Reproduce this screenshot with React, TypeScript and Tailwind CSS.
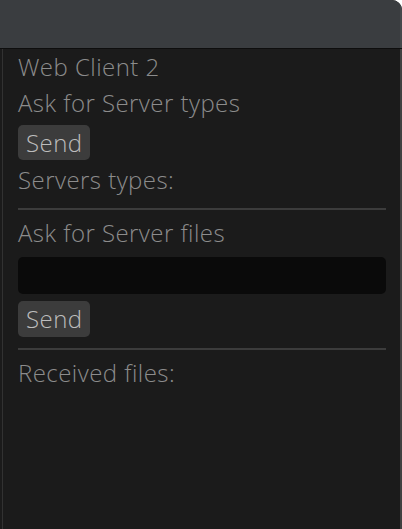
import React from "react";

const font = { fontFamily: '"Open Sans", "Noto Sans", sans-serif' };

function Row({ children, mt }: { children: React.ReactNode; mt: string }) {
  return (
    <div className={`${mt} h-[30px] leading-[30px] text-[24px] font-light tracking-[0.45px] text-[#8c8c8c] whitespace-nowrap`}>
      {children}
    </div>
  );
}

function SendButton({ mt, h }: { mt: string; h: string }) {
  return (
    <div className={`${mt} flex`}>
      <div className={`${h} w-[72px] rounded-[5px] bg-[#3c3c3c] pl-[8px] flex items-center text-[24px] font-light tracking-[0.45px] text-[#bdbdbd]`}>
        Send
      </div>
    </div>
  );
}

export default function App() {
  return (
    <div className="w-[402px] h-[529px] bg-white" style={font}>
      <div className="w-full h-full rounded-tr-[10px] overflow-hidden flex flex-col bg-[#1b1b1b]">
        <div className="h-[49px] bg-[#3a3d40] border-b border-[#0e0e0e] shrink-0 flex">
          <div className="flex-1" />
          <div className="w-[2px] bg-[#45484b]" />
        </div>
        <div className="flex-1 flex">
          <div className="w-[2px]" />
          <div className="w-[1px] bg-[#323232]" />
          <div className="flex-1 flex flex-col pl-[15px] pr-[14px]">
            <Row mt="mt-[3px]">Web Client 2</Row>
            <Row mt="mt-[6px]">Ask for Server types</Row>
            <SendButton mt="mt-[7px]" h="h-[35px]" />
            <Row mt="mt-[5px]">Servers types:</Row>
            <div className="mt-[13px] h-[2px] bg-[#3c3c3c]" />
            <Row mt="mt-[8px]">Ask for Server files</Row>
            <div className="mt-[9px] h-[37px] rounded-[5px] bg-[#0a0a0a]" />
            <SendButton mt="mt-[7px]" h="h-[36px]" />
            <div className="mt-[11px] h-[2px] bg-[#3c3c3c]" />
            <Row mt="mt-[8px]">Received files:</Row>
          </div>
          <div className="w-[2px] bg-[#404040]" />
        </div>
      </div>
    </div>
  );
}
